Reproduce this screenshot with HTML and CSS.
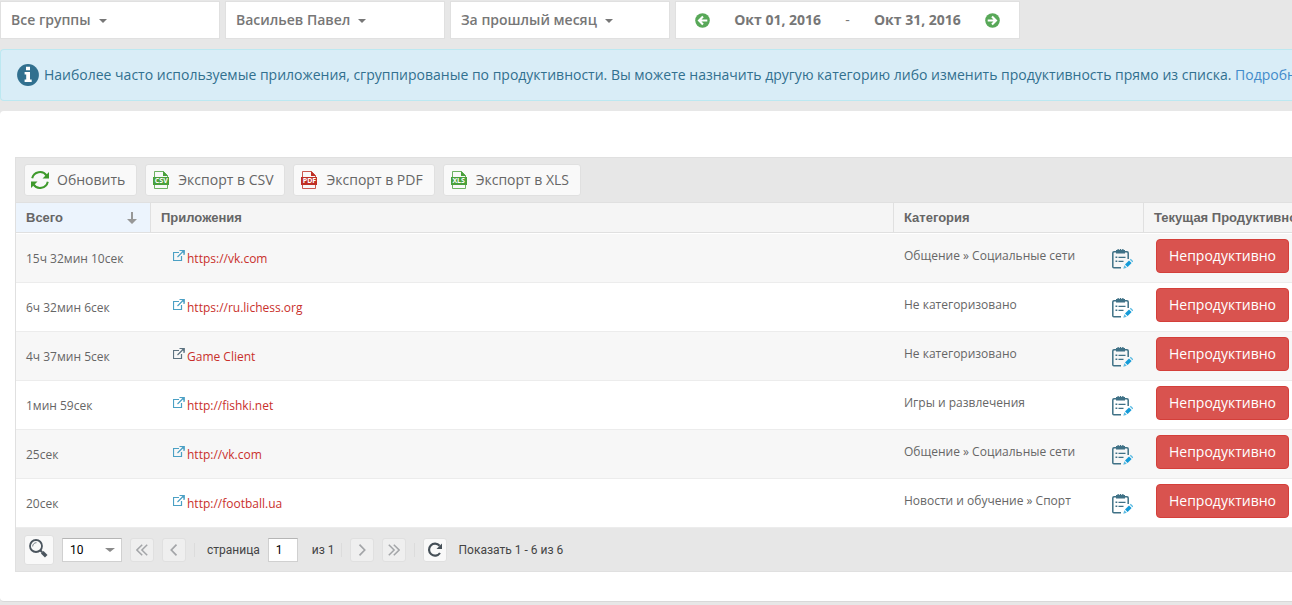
FILE: index.html
```html
<!DOCTYPE html>
<html lang="ru">
<head>
<meta charset="utf-8">
<title>Приложения</title>
<link rel="stylesheet" href="styles.css">
</head>
<body>
<svg class="sprite" aria-hidden="true">
  <symbol id="arrow-circle" viewBox="0 0 15 15"><circle cx="7.500" cy="7.500" r="7.300" fill="#58a858"/><path d="M12.300 7.500H4.500M8 3.400 4 7.500 8 11.600" fill="none" stroke="#fff" stroke-width="2.100"/></symbol>
  <symbol id="info" viewBox="0 0 22 22"><circle cx="11" cy="11" r="10.900" fill="#31708f"/><path d="M9 2.800h4v3.400H9zM7.600 8H13v7.600h1.700V18H7.600v-2.400h1.600v-5.200H7.600z" fill="#fff"/></symbol>
  <symbol id="sync" viewBox="0 0 20 20"><path d="M2.200 8.300A8 8 0 0 1 16.600 5.600M17.800 11.700A8 8 0 0 1 3.400 14.400" fill="none" stroke="#3f9a2c" stroke-width="2"/><path d="M19 2v6.500h-6.500zM1 18v-6.500h6.500z" fill="#3f9a2c"/></symbol>
  <symbol id="file" viewBox="0 0 16 18"><path d="M1.500 6V.5h9l4 4V6M1.500 14v3.500h13V14" fill="none" stroke="currentColor" stroke-opacity=".8"/><path d="M10 0v5h5zM0 6h16v8H0z" fill="currentColor"/></symbol>
  <symbol id="external" viewBox="0 0 12 12"><path d="M6 2.500H.5v8h8V6M4.500 7 10.500 1M6.500.5h4.500V5" fill="none" stroke="currentColor" stroke-width="1.200"/><path d="M7.500 0H12v4.500z" fill="currentColor" opacity=".7"/></symbol>
  <symbol id="edit" viewBox="0 0 21 20"><path d="M4 2.800H2Q.8 2.800.8 4v13.800q0 1 1 1H9M13 2.800h2q1.200 0 1.200 1.200v6" fill="none" stroke="#3f7186" stroke-width="1.500"/><path d="M4 1h1.500V0h1.300v1h1V0h1.400v1h1V0h1.300v1H13v3.500H4z" fill="#3f7186"/><path d="M3.500 7.500h1.800v1.600H3.500zM3.500 11.500h1.800v1.600H3.500zM6.500 7.700h7V9h-7zM6.500 11.700h5V13h-5z" fill="#3f7186"/><path d="m13 15.500 4-4 2.600 2.600-4 4z" fill="#149bd8"/><path d="m17.800 10.700 1-.9 2.600 2.500-1 1zM12.300 16.300l2.500 2.500-3.500 1z" fill="#5bbbe2"/></symbol>
  <symbol id="down" viewBox="0 0 10 12"><path d="M4 0h2v7h4L5 12 0 7h4z" fill="#979797"/></symbol>
  <symbol id="search" viewBox="0 0 19 19"><circle cx="7" cy="7" r="6" fill="none" stroke="#4b555e" stroke-width="1.800"/><path d="M3.700 7.500A3.600 3.600 0 0 1 7.500 3.700" fill="none" stroke="#7c858c"/><path d="m11 11 2.200 2.200" stroke="#4b555e" stroke-width="2"/><path d="m13.200 13.200 4 4" stroke="#4b555e" stroke-width="3.600"/></symbol>
  <symbol id="one" viewBox="0 0 12 12"><path d="M8.500.7 3.300 6l5.200 5.300" fill="none" stroke="#a3a5a8" stroke-width="1.700"/></symbol>
  <symbol id="two" viewBox="0 0 12 12"><path d="M6.200.7.900 6l5.300 5.300M11.200.7 5.900 6l5.300 5.300" fill="none" stroke="#a3a5a8" stroke-width="1.500"/></symbol>
  <symbol id="reload" viewBox="0 0 16 16"><path d="M12.600 3.700A6 6 0 1 0 13 11" fill="none" stroke="#454f57" stroke-width="2.200"/><path d="M15 1.500V7H9.500z" fill="#454f57"/></symbol>
</svg>

<div class="filters">
  <button class="filter" type="button">Все группы<span class="caret"></span></button>
  <button class="filter" type="button">Васильев Павел<span class="caret"></span></button>
  <button class="filter" type="button">За прошлый месяц<span class="caret"></span></button>
  <div class="period">
    <button class="step" type="button" aria-label="Предыдущий период"><svg><use href="#arrow-circle"/></svg></button>
    <span class="date">Окт 01, 2016</span>
    <span class="dash">-</span>
    <span class="date">Окт 31, 2016</span>
    <button class="step step-next" type="button" aria-label="Следующий период"><svg><use href="#arrow-circle"/></svg></button>
  </div>
</div>

<div class="notice">
  <svg class="notice-icon"><use href="#info"/></svg>
  <p>Наиболее часто используемые приложения, сгруппированые по продуктивности. Вы можете назначить другую категорию либо изменить продуктивность прямо из списка. <a href="#">Подробнее</a></p>
</div>

<main class="panel">
  <div class="grid">
    <div class="toolbar">
      <button class="tool" type="button"><svg class="sync"><use href="#sync"/></svg>Обновить</button>
      <button class="tool" type="button"><span class="file green"><svg><use href="#file"/></svg><b>CSV</b></span>Экспорт в CSV</button>
      <button class="tool" type="button"><span class="file red"><svg><use href="#file"/></svg><b>PDF</b></span>Экспорт в PDF</button>
      <button class="tool" type="button"><span class="file green"><svg><use href="#file"/></svg><b>XLS</b></span>Экспорт в XLS</button>
    </div>
    <table class="apps">
      <colgroup><col class="c-total"><col><col class="c-category"><col class="c-state"></colgroup>
      <thead>
        <tr>
          <th class="sorted"><span class="sort">Всего<svg><use href="#down"/></svg></span></th>
          <th>Приложения</th>
          <th>Категория</th>
          <th>Текущая Продуктивность</th>
        </tr>
      </thead>
      <tbody>
        <tr><td>15ч 32мин 10сек</td><td><a class="app" href="#"><svg><use href="#external"/></svg>https://vk.com</a></td><td><div class="category">Общение » Социальные сети<button type="button" aria-label="Изменить категорию"><svg><use href="#edit"/></svg></button></div></td><td class="state"><button class="danger" type="button">Непродуктивно</button></td></tr>
        <tr><td>6ч 32мин 6сек</td><td><a class="app" href="#"><svg><use href="#external"/></svg>https://ru.lichess.org</a></td><td><div class="category">Не категоризовано<button type="button" aria-label="Изменить категорию"><svg><use href="#edit"/></svg></button></div></td><td class="state"><button class="danger" type="button">Непродуктивно</button></td></tr>
        <tr><td>4ч 37мин 5сек</td><td><a class="app local" href="#"><svg><use href="#external"/></svg>Game Client</a></td><td><div class="category">Не категоризовано<button type="button" aria-label="Изменить категорию"><svg><use href="#edit"/></svg></button></div></td><td class="state"><button class="danger" type="button">Непродуктивно</button></td></tr>
        <tr><td>1мин 59сек</td><td><a class="app" href="#"><svg><use href="#external"/></svg>http://fishki.net</a></td><td><div class="category">Игры и развлечения<button type="button" aria-label="Изменить категорию"><svg><use href="#edit"/></svg></button></div></td><td class="state"><button class="danger" type="button">Непродуктивно</button></td></tr>
        <tr><td>25сек</td><td><a class="app" href="#"><svg><use href="#external"/></svg>http://vk.com</a></td><td><div class="category">Общение » Социальные сети<button type="button" aria-label="Изменить категорию"><svg><use href="#edit"/></svg></button></div></td><td class="state"><button class="danger" type="button">Непродуктивно</button></td></tr>
        <tr><td>20сек</td><td><a class="app" href="#"><svg><use href="#external"/></svg>http://football.ua</a></td><td><div class="category">Новости и обучение » Спорт<button type="button" aria-label="Изменить категорию"><svg><use href="#edit"/></svg></button></div></td><td class="state"><button class="danger" type="button">Непродуктивно</button></td></tr>
      </tbody>
    </table>
    <div class="pager">
      <button class="find" type="button" aria-label="Поиск"><svg><use href="#search"/></svg></button>
      <span class="size"><select aria-label="Строк на странице"><option>10</option></select><span class="size-caret"></span></span>
      <button class="nav" type="button" aria-label="Первая"><svg><use href="#two"/></svg></button>
      <button class="nav" type="button" aria-label="Назад"><svg><use href="#one"/></svg></button>
      <span class="divider"></span>
      <label class="page">страница<input type="text" value="1"></label>
      <span class="count">из 1</span>
      <span class="divider"></span>
      <button class="nav forward" type="button" aria-label="Вперёд"><svg><use href="#one"/></svg></button>
      <button class="nav forward" type="button" aria-label="Последняя"><svg><use href="#two"/></svg></button>
      <span class="divider"></span>
      <button class="nav active" type="button" aria-label="Перезагрузить"><svg><use href="#reload"/></svg></button>
      <span>Показать 1 - 6 из 6</span>
    </div>
  </div>
</main>
</body>
</html>
```

FILE: styles.css
```css
* { box-sizing: border-box; }
body { margin: 0; padding-top: 1px; background: #e7e7e7; color: #666; font: 14px/20px "Open Sans", "Noto Sans", sans-serif; overflow: hidden; }
button { font: inherit; color: inherit; margin: 0; cursor: pointer; }
.sprite { display: none; }
a { color: #428bca; text-decoration: none; }

.filters { display: flex; gap: 5px; }
.filter, .period { height: 38px; background: #fff; border: 1px solid #e0e0e0; color: #777; display: flex; align-items: center; }
.filter { width: 220px; padding: 0 10px; font-weight: 600; gap: 8px; }
.caret { border: 4px solid transparent; border-top-color: #777; border-bottom: 0; margin-top: 2px; }
.period { width: 345px; padding: 0 19px; font-weight: 700; justify-content: space-between; }
.step { border: 0; background: none; padding: 0; display: flex; }
.step svg { width: 15px; height: 15px; }
.step-next { transform: scaleX(-1); }
.dash { font-weight: 400; }

.notice { margin-top: 10px; height: 52px; padding: 0 16px; display: flex; align-items: center; gap: 5px; background: #d9edf7; border: 1px solid #bce8f1; border-right: 0; border-radius: 4px 0 0 4px; color: #31708f; white-space: nowrap; overflow: hidden; }
.notice p { margin: 0; }
.notice-icon { width: 22px; height: 22px; flex: none; }

.panel { margin-top: 10px; padding: 46px 0 29px 15px; background: #fff; border-bottom: 1px solid #d9d9d9; border-radius: 4px 0 0 4px; }
.grid { border: 1px solid #e0e0e0; border-right: 0; }
.toolbar { background: #e7e7e7; padding: 6px 8px; display: flex; gap: 8px; }
.tool { height: 32px; padding: 0 11px 0 5px; display: flex; align-items: center; gap: 7px; background: #f9f9f9; border: 1px solid #e0e0e0; border-radius: 3px; }
.sync { width: 20px; height: 20px; }
.file { display: grid; place-items: center; width: 20px; }
.file svg { grid-area: 1 / 1; width: 16px; height: 18px; }
.file b { grid-area: 1 / 1; color: #fff; font-size: 7px; line-height: 8px; padding-top: 2px; }
.green { color: #4aa03c; }
.red { color: #bf2f25; }

.apps { width: 100%; table-layout: fixed; border-collapse: separate; border-spacing: 0; font-size: 12px; line-height: 16px; }
.c-total { width: 135px; }
.c-category { width: 250px; }
.c-state { width: 148px; }
th { height: 31px; padding: 0 10px; text-align: left; font: bold 13px/16px "Liberation Sans", Arial, sans-serif; color: #666; background: #f5f5f5; border: 1px solid #e0e0e0; border-width: 1px 1px 1px 0; white-space: nowrap; overflow: hidden; }
th:last-child { border-right: 0; }
th.sorted { background: #ecf4fd; }
.sort { display: flex; justify-content: space-between; align-items: center; padding-right: 3px; }
.sort svg { width: 10px; height: 12px; }
td { height: 49px; padding: 1px 10px 0; border-bottom: 1px solid #ececec; }
tbody tr:nth-child(odd) { background: #f7f7f7; }
tbody tr:first-child td { height: 50px; border-top: 1px solid #fff; }
.app { display: flex; align-items: center; gap: 2px; padding-left: 12px; color: #c9302c; }
.app svg { width: 12px; height: 12px; color: #4ba0c4; margin-bottom: 5px; }
.local svg { color: #5d7280; }
.category { display: flex; justify-content: space-between; align-items: center; height: 28px; padding-bottom: 6px; }
.category button { border: 0; padding: 6px 1px 0 0; background: none; display: flex; }
.category svg { width: 21px; height: 20px; }
td.state { padding: 0 0 4px 12px; }
.danger { display: block; height: 34px; padding: 0 12px; font-size: 14px; line-height: 20px; color: #fff; background: #d9534f; border: 1px solid #d43f3a; border-radius: 4px; white-space: nowrap; }

.pager { height: 43px; padding: 0 8px; display: flex; align-items: center; background: #e7e7e7; color: #444; font: 12px/16px Roboto, "Liberation Sans", sans-serif; }
.pager button { display: grid; place-items: center; padding: 0; border: 1px solid #e0e0e0; border-radius: 3px; background: #f9f9f9; }
.find { width: 30px; height: 30px; }
.pager .find { padding: 0 2px 2px 0; }
.find svg { width: 19px; height: 19px; }
.size { display: grid; align-items: center; margin: 0 8px; }
.size select, .page input { font: inherit; color: #000; background: #fff; border: 1px solid #d0d0d0; border-top-color: #b5b5b5; border-radius: 0; height: 24px; padding: 0 7px; }
.size select { grid-area: 1 / 1; width: 60px; appearance: none; }
.size-caret { grid-area: 1 / 1; justify-self: end; margin-right: 7px; border: 5px solid transparent; border-top-color: #8a8a8a; border-bottom: 0; border-top-width: 4px; pointer-events: none; }
.pager .nav { width: 24px; height: 24px; margin-right: 8px; background: #efefef; }
.nav svg { width: 12px; height: 12px; }
.pager .active { background: #f9f9f9; margin: 0 12px 0 8px; }
.active svg { width: 16px; height: 16px; }
.forward svg { transform: scaleX(-1); }
.divider { width: 1px; height: 14px; background: #dcdcdc; }
.page { display: flex; align-items: center; gap: 8px; margin-left: 12px; }
.page input { width: 30px; }
.count { margin: 0 6px 0 14px; }
.count + .divider { margin-right: 8px; }
```
